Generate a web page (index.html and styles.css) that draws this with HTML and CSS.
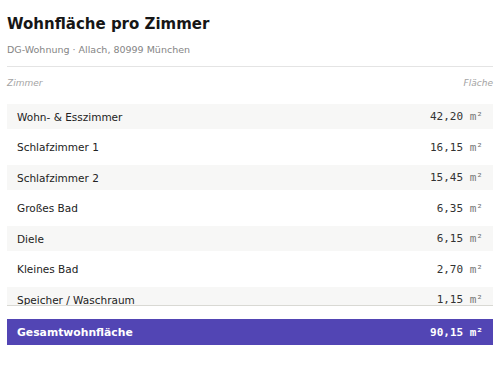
FILE: index.html
```html
<!DOCTYPE html>
<html lang="de">
<head>
<meta charset="utf-8">
<title>Wohnfläche pro Zimmer</title>
<link rel="stylesheet" href="styles.css">
</head>
<body>
<main class="card">
  <header class="head">
    <h1 class="title">Wohnfläche pro Zimmer</h1>
    <p class="subtitle">DG-Wohnung · Allach, 80999 München</p>
  </header>
  <div class="colhead">
    <span>Zimmer</span>
    <span>Fläche</span>
  </div>
  <div class="list">
    <div class="row"><span class="name">Wohn- &amp; Esszimmer</span><span class="val">42,20 <span class="unit">m²</span></span></div>
    <div class="row"><span class="name">Schlafzimmer 1</span><span class="val">16,15 <span class="unit">m²</span></span></div>
    <div class="row"><span class="name">Schlafzimmer 2</span><span class="val">15,45 <span class="unit">m²</span></span></div>
    <div class="row"><span class="name">Großes Bad</span><span class="val">6,35 <span class="unit">m²</span></span></div>
    <div class="row"><span class="name">Diele</span><span class="val">6,15 <span class="unit">m²</span></span></div>
    <div class="row"><span class="name">Kleines Bad</span><span class="val">2,70 <span class="unit">m²</span></span></div>
    <div class="row"><span class="name">Speicher / Waschraum</span><span class="val">1,15 <span class="unit">m²</span></span></div>
  </div>
  <div class="total">
    <span class="name">Gesamtwohnfläche</span>
    <span class="val">90,15 m²</span>
  </div>
</main>
</body>
</html>
```

FILE: styles.css
```css
* { box-sizing: border-box; }
html, body { margin: 0; padding: 0; background: #ffffff; }
body { font-family: "DejaVu Sans", "Noto Sans", sans-serif; color: #222; }

.card { padding: 0 7px; }

.head {
  padding-top: 14px;
  padding-bottom: 9px;
  border-bottom: 1px solid #e4e4e4;
}
.title {
  margin: 0;
  font-size: 15px;
  line-height: 20px;
  font-weight: bold;
  color: #161616;
}
.subtitle {
  margin: 9px 0 0;
  font-size: 9.5px;
  line-height: 14px;
  color: #858585;
}

.colhead {
  display: flex;
  justify-content: space-between;
  padding: 10px 0 15px;
  font-size: 9px;
  line-height: 12px;
  font-style: italic;
  color: #a3a3a3;
}

.list {
  display: flex;
  flex-direction: column;
  gap: 5.5px;
  height: 202px;
  overflow: hidden;
  border-bottom: 1px solid #d9d9d4;
}
.row {
  flex: none;
  height: 25px;
  display: flex;
  align-items: center;
  justify-content: space-between;
  padding: 0 10px;
  font-size: 10.5px;
  color: #222;
}
.row:nth-child(odd) { background: #f7f7f6; }

.val {
  font-family: "DejaVu Sans Mono", "Liberation Mono", monospace;
  font-size: 11px;
  color: #333;
}
.unit { color: #777; }

.total {
  margin-top: 13px;
  height: 26px;
  display: flex;
  align-items: center;
  justify-content: space-between;
  padding: 0 10px;
  background: #5245b4;
  color: #ffffff;
  font-size: 10.8px;
  font-weight: bold;
}
.total .val { color: #ffffff; font-weight: bold; font-size: 11px; }
```
